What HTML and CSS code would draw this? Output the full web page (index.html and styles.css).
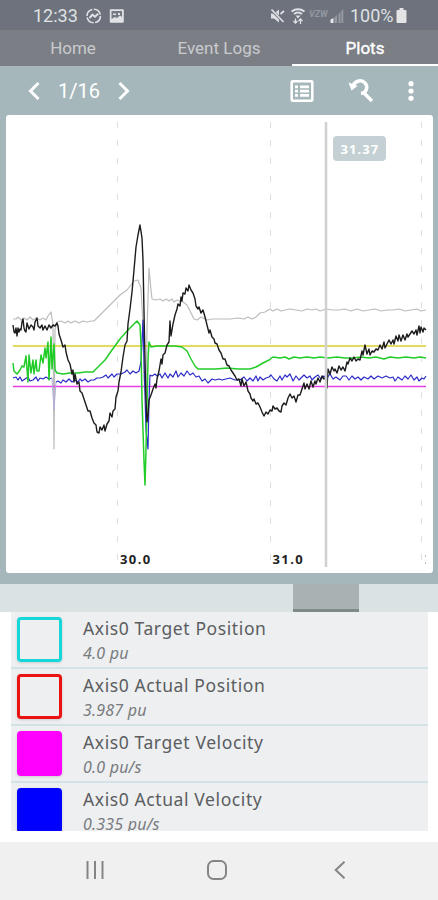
FILE: index.html
```
<!DOCTYPE html>
<html lang="en">
<head>
  <meta charset="UTF-8">
  <title>Plots</title>
  <meta name="viewport" content="width=device-width, initial-scale=1">
  <link rel="stylesheet" href="styles.css">
</head>
<body>

<div class="status">
  <span class="clock">12:33</span>
  <svg class="status-left" width="44" height="18" viewBox="84 6 44 18">
    <circle cx="93.700" cy="15" r="6.700" fill="none" stroke="#dfe1e4" stroke-width="1.600" stroke-dasharray="9 1.500"/>
    <path d="M89.500 17l3-3.300 2.500 2 3.200-3" fill="none" stroke="#dfe1e4" stroke-width="2"/>
    <rect x="109.800" y="8.200" width="14" height="13.500" rx="1" fill="#dfe1e4"/>
    <path d="M111.500 10h10.500v6l-2-1.500-3 2.500-2-1-3.500 2z" fill="#747a83"/>
    <path d="M113 12.500h3v1.500h-3zM118 12h2v2h-2z" fill="#dfe1e4"/>
  </svg>
  <svg class="status-right" width="76" height="20" viewBox="269 5 76 20">
    <path d="M271 12.500h3l5-4v13l-5-4h-3z" fill="#dfe1e4"/>
    <path d="M271.500 9l12 12" stroke="#6d727c" stroke-width="3"/>
    <path d="M271.500 8.500l12 12.500M280.500 13l3.500-3" stroke="#dfe1e4" stroke-width="1.700"/>
    <path d="M291.500 10.500q6.500-4.500 13 0M294 13q4-3 8 0" fill="none" stroke="#dfe1e4" stroke-width="2"/>
    <path d="M295.500 14.500h5l-2.500 3z" fill="#dfe1e4"/>
    <path d="M295.500 17.500v4.500m-2-2l2 2 2-2M300.500 23v-5m-2 2l2-2 2 2" fill="none" stroke="#dfe1e4" stroke-width="1.300"/>
    <text x="309" y="16" class="carrier">VZW</text>
    <path d="M330.500 22v-3.500l3-1.500v5z" fill="#e5e7e9"/>
    <path d="M334.500 22v-6l2.500-2v8zM338.500 22v-9l2-2v11zM341.300 22v-12l2-2v14z" fill="#959aa1"/>
  </svg>
  <span class="percent">100%</span>
  <svg width="11" height="16" viewBox="0 0 11 16"><path d="M3.500 0h4v2h2q1 0 1 1v11q0 1-1 1h-8q-1 0-1-1v-11q0-1 1-1h2z" fill="#e2e4e6"/></svg>
</div>

<nav class="tabs">
  <a class="tab">Home</a>
  <a class="tab">Event Logs</a>
  <a class="tab active">Plots</a>
</nav>

<main class="plots">
  <div class="toolbar">
    <svg width="12" height="20" viewBox="0 0 12 20"><path d="M10.500 2L2.500 10l8 8" fill="none" stroke="#fff" stroke-width="3"/></svg>
    <span class="page">1/16</span>
    <svg width="12" height="20" viewBox="0 0 12 20"><path d="M1.500 2l8 8-8 8" fill="none" stroke="#fff" stroke-width="3"/></svg>
    <div class="actions">
      <svg width="24" height="24" viewBox="0 0 24 24">
        <rect x="1.700" y="2.200" width="20.600" height="19.600" rx="1" fill="none" stroke="#fff" stroke-width="2.500"/>
        <path d="M5 6.500h3v2.700h-3zM10 6.500h9v2.700h-9zM5 10.800h3v2.700h-3zM10 10.800h9v2.700h-9zM5 15.100h3v2.700h-3zM10 15.100h9v2.700h-9z" fill="#fff"/>
      </svg>
      <svg width="26" height="26" viewBox="0 0 26 26">
        <path d="M5 7.500C8 2.500 13 1.500 16.500 4.500C20.500 8 19 14.500 13 15.500M15.500 14.500L24 23" fill="none" stroke="#fff" stroke-width="3.500"/>
        <path d="M.5 4.500l9 3.500-6 4.500z" fill="#fff"/>
      </svg>
      <svg width="6" height="20" viewBox="0 0 6 20"><g fill="#fff"><circle cx="3" cy="2.700" r="2.600"/><circle cx="3" cy="10" r="2.600"/><circle cx="3" cy="17.300" r="2.600"/></g></svg>
    </div>
  </div>

  <div class="chart">
    <svg width="427" height="458" viewBox="6 115 427 458">
      <!-- grid -->
      <path class="grid" d="M117.500 122V567M270.500 122V567M421.500 122V567"/>

      <!-- series -->
      <polyline class="line gray" points="13,319 16,319 18,317 21,320 24,318 27,320 30,317 33,320 36,318 40,320 43,318 46,320 48,316 51,312 53,325 54,449 55,330 57,322 61,321 65,323 68,321 71,323 75,321 79,323 83,321 87,322 91,321 94,321 100,315 107,308 114,301 120,295 127,290 134,281 138,280 141,288 143,325 144,380 146,400 147,330 149,268 151,290 152,299 156,300 160,299 163,301 166,299 169,301 172,299 174,302 177,300 180,301 183,302 187,305 190,311 194,319 197,320 201,317 207,320 212,319 220,319 230,319 238,318 244,319 248,317 252,319 256,317 260,313 265,312 270,309 273,311 277,309 281,311 285,310 290,309 296,310 302,311 307,309 312,310 316,309 320,311 326,309 333,310 339,310 345,309 351,311 357,309 363,311 369,310 375,309 381,311 387,310 393,310 399,309 405,311 411,310 417,309 421,311 426,310"/>
      <path class="line yellow" d="M13 346H426"/>
      <path class="line magenta" d="M13 386.500H426"/>
      <polyline class="line blue" points="13,378 16,377 18,380 20,377 22,381 25,379 28,377 30,381 33,380 36,377 38,381 40,378 43,379 46,377 49,379 52,378"/>
      <path class="dip" d="M52 378L54 410L56 382"/>
      <polyline class="line blue" points="56,382 58,381 61,383 63,380 66,382 69,379 72,382 75,380 78,382 80,379 82,381 85,379 88,382 91,380 94,380 97,378 100,378 103,377 106,375 108,378 112,374 114,377 117,374 121,374 125,372 127,370 130,374 133,371 136,373 139,371 141,362 143,320 144,360 146,430 148,449 149,400 150,375 152,376 155,374 157,376 160,374 162,378 165,373 168,378 170,374 173,377 176,371 178,377 181,373 184,376 187,371 190,375 193,373 196,377 199,376 202,381 205,379 208,383 212,379 215,380 219,379 222,380 226,379 230,378 235,380 240,380 244,377 247,381 250,378 253,381 256,376 258,381 260,377 263,380 266,378 269,377 271,375 274,379 277,381 280,376 282,380 285,375 287,377 290,374 293,381 296,376 299,380 302,377 304,375 307,378 310,376 312,380 315,377 318,375 321,379 324,376 327,378 330,374 333,379 336,377 340,380 343,376 346,376 349,380 352,376 355,379 358,377 361,380 364,377 368,379 371,376 374,379 378,376 382,378 386,376 390,378 393,377 395,381 398,377 402,380 405,376 408,379 411,375 414,380 417,377 419,381 422,378 424,379 426,376"/>
      <polyline class="line green" points="13,363 14,371 17,374 20,370 22,366 24,367 26,356 28,382 29,355 31,373 33,360 34,374 36,360 37,371 39,371 41,355 43,363 45,348 46,358 48,342 49,380 51,337 52,369 54,344 55,370 57,373 63,374 70,373 78,373 85,372 93,372 98,367 105,360 112,350 120,339 127,331 133,325 137,321 140,325 141,345 142,400 144,461 145,485 146,450 148,360 149,342 151,347 157,346 167,346 175,346 182,347 187,351 191,359 195,366 198,369 205,369 216,369 227,368 238,369 250,369 256,367 263,363 269,360 273,357 280,358 285,357 289,359 294,357 300,358 307,357 314,358 320,357 328,358 337,357 345,358 353,358 361,357 369,358 376,357 384,359 390,357 398,358 406,357 414,358 420,357 426,358"/>
      <polyline class="line black" points="13,325 14,332 15,333 16,328 17,336 18,328 19,332 20,329 21,330 22,322 23,319 24,328 25,331 26,332 27,323 29,329 31,325 33,327 34,330 35,322 37,318 38,326 40,328 42,325 43,330 45,326 47,330 49,325 51,328 53,325 55,326 57,323 58,326 59,334 61,340 63,347 65,345 66,352 68,360 70,364 72,374 73,370 74,382 75,374 77,384 79,382 80,391 82,393 84,399 86,405 88,411 90,411 92,418 94,423 96,425 97,432 99,433 100,427 102,430 104,425 105,431 107,424 109,421 110,413 112,417 113,411 115,409 116,397 118,391 119,382 121,372 123,357 125,345 127,341 128,324 130,309 132,292 134,270 136,247 138,235 140,225 142,238 143,260 144,312 145,360 146,400 147,422 148,415 149,400 151,395 153,389 155,384 156,388 157,379 159,371 161,359 162,364 163,355 165,353 167,345 169,342 170,321 171,336 173,324 175,315 177,309 178,304 180,306 181,297 182,301 183,293 185,294 186,288 188,291 189,285 191,290 193,293 195,299 196,306 198,309 199,307 201,313 203,310 205,317 207,325 209,333 210,330 212,337 214,339 215,343 217,344 219,350 221,353 223,359 225,359 227,365 229,366 231,370 233,373 235,376 237,380 239,379 241,386 242,379 244,386 246,382 248,391 250,394 251,398 253,401 254,399 256,404 258,403 260,407 262,412 264,416 266,412 268,414 270,410 272,411 273,406 275,409 277,408 279,411 281,412 282,406 284,403 286,405 288,398 290,394 292,398 294,396 296,402 298,395 300,395 302,389 304,383 305,389 307,384 309,389 311,381 313,387 315,381 316,384 318,378 320,382 322,376 324,379 326,377 327,388 328,369 330,374 332,367 334,371 335,369 337,373 339,366 341,370 343,367 345,371 347,362 348,364 350,358 352,361 354,357 356,361 358,359 360,360 362,351 363,355 365,345 367,354 369,349 370,355 372,351 374,352 376,349 378,350 380,345 382,349 384,342 385,348 387,344 389,340 391,344 393,340 394,344 396,336 398,341 399,335 401,341 403,335 405,340 407,334 408,337 410,334 412,331 414,334 416,330 417,335 419,326 420,333 421,327 423,332 424,328 426,330"/>

      <!-- cursor -->
      <path class="cursor" d="M326 122V567"/>
      <rect x="333" y="136" width="53" height="25" rx="4" fill="#c4d0d3"/>
      <text x="340.500" y="153.500" class="cursor-label">31.37</text>

      <text x="120" y="564" class="axis">30.0</text>
      <text x="272.500" y="564" class="axis">31.0</text>
      <path d="M425.500 555v2M425.500 562v2" stroke="#bbb"/>
    </svg>
  </div>
</main>

<div class="scrollbar"><div class="thumb"></div></div>

<ul class="legend">
  <li class="row">
    <span class="swatch cyan"></span>
    <div><div class="name">Axis0 Target Position</div><div class="value">4.0 pu</div></div>
  </li>
  <li class="row">
    <span class="swatch red"></span>
    <div><div class="name">Axis0 Actual Position</div><div class="value">3.987 pu</div></div>
  </li>
  <li class="row">
    <span class="swatch pink"></span>
    <div><div class="name">Axis0 Target Velocity</div><div class="value">0.0 pu/s</div></div>
  </li>
  <li class="row">
    <span class="swatch navy"></span>
    <div><div class="name">Axis0 Actual Velocity</div><div class="value">0.335 pu/s</div></div>
  </li>
</ul>

<footer class="navbar">
  <svg width="18" height="18" viewBox="0 0 18 18"><path d="M1.500 0v18M9 0v18M16.500 0v18" stroke="#858585" stroke-width="2"/></svg>
  <svg class="home" width="20" height="20" viewBox="0 0 20 20"><rect x="1" y="1" width="18" height="18" rx="5.500" fill="none" stroke="#858585" stroke-width="2"/></svg>
  <svg width="12" height="18" viewBox="0 0 12 18"><path d="M10.500 .7L1.700 9l8.800 8.300" fill="none" stroke="#858585" stroke-width="2"/></svg>
</footer>

</body>
</html>
```
FILE: styles.css
```
* {
  box-sizing: border-box;
}
body {
  margin: 0;
  width: 438px;
  height: 900px;
  background-color: #fff;
  font-family: Roboto, sans-serif;
  display: flex;
  flex-direction: column;
  overflow: hidden;
}
svg {
  display: block;
  flex: none;
}
.status {
  height: 30px;
  flex: none;
  background-color: #6d727c;
  color: #dfe1e4;
  display: flex;
  align-items: center;
  padding: 1px 31px 0 33px;
  font-size: 18px;
}
.clock {
  width: 51px;
}
.status-right {
  margin-left: auto;
}
.percent {
  width: 46px;
  margin-left: 5px;
}
.carrier {
  font-size: 9px;
  font-style: italic;
  font-weight: bold;
  fill: #9499a0;
}
.tabs {
  height: 36px;
  flex: none;
  display: grid;
  grid-template-columns: repeat(3, 1fr);
  background-color: #7b7e85;
}
.tab {
  height: 36px;
  color: #c9cbce;
  font-size: 17px;
  line-height: 37px;
  text-align: center;
}
.tab.active {
  color: #fff;
  -webkit-text-stroke: 0.4px #fff;
  border-bottom: 2px solid #fff;
}
.plots {
  height: 518px;
  flex: none;
  background-color: #a6b7bb;
  padding: 0 5px 0 6px;
}
.toolbar {
  height: 49px;
  display: flex;
  align-items: center;
  padding: 0 19px 0 22px;
}
.page {
  width: 56px;
  margin: 0 11px;
  color: #fff;
  font-size: 20px;
  text-align: center;
}
.actions {
  display: flex;
  align-items: center;
  gap: 34px;
  margin-left: auto;
}
.chart {
  height: 458px;
  background-color: #fff;
  border-radius: 3px;
  overflow: hidden;
}
.grid {
  stroke: #dedede;
  stroke-dasharray: 6 12;
}
.line {
  fill: none;
  stroke-width: 1.2;
  stroke-linejoin: round;
}
.gray {
  stroke: #bcbcbc;
}
.yellow {
  stroke: #d9cf2c;
  stroke-width: 1.5;
}
.magenta {
  stroke: #e83ce8;
  stroke-width: 1.6;
}
.blue {
  stroke: #2b2bc8;
}
.dip {
  fill: none;
  stroke: #b3aedb;
}
.green {
  stroke: #22cc28;
  stroke-width: 1.5;
}
.black {
  stroke: #1c1c1c;
  stroke-width: 1.4;
}
.cursor {
  stroke: #d0d0d0;
  stroke-width: 2.5;
}
.cursor-label,
.axis {
  font-family: "Noto Sans", sans-serif;
  font-size: 13px;
  font-weight: bold;
  letter-spacing: 1.4px;
}
.cursor-label {
  fill: #fff;
  letter-spacing: 1.1px;
}
.axis {
  fill: #222;
}
.scrollbar {
  height: 28px;
  flex: none;
  background-color: #dae2e4;
}
.thumb {
  width: 66px;
  height: 28px;
  margin-left: 293px;
  background-color: #a9b2b3;
  border-bottom: 3px solid #7e898a;
}
.legend {
  height: 219px;
  flex: none;
  margin: 0 10px 11px 11px;
  padding: 0;
  list-style: none;
  overflow: hidden;
  background-color: #edeff1;
  font-family: "Noto Sans", sans-serif;
}
.row {
  height: 57.1px;
  display: flex;
  padding: 5px 0 0 6px;
  border-bottom: 2px solid #d3e2e4;
}
.swatch {
  width: 45px;
  height: 45px;
  flex: none;
  margin-right: 21px;
  border-radius: 4px;
  border: 3px solid;
  box-shadow: 0 1px 3px rgba(0,0,0,0.15);
}
.cyan {
  border-color: #16d6da;
}
.red {
  border-color: #ec1212;
}
.pink {
  border-color: #ff00ff;
  background-color: #ff00ff;
}
.navy {
  border-color: #0000ff;
  background-color: #0000ff;
}
.name {
  font-size: 17.5px;
  line-height: 23px;
  letter-spacing: 0.6px;
  color: #5b5d60;
  white-space: nowrap;
}
.value {
  font-size: 16px;
  line-height: 26px;
  letter-spacing: 0.2px;
  font-style: italic;
  color: #797b7e;
}
.navbar {
  flex: 1;
  background-color: #f0f0f0;
  display: flex;
  justify-content: space-between;
  align-items: center;
  padding: 0 92px 2px 86px;
}
.home {
  margin-right: 4px;
}
```
